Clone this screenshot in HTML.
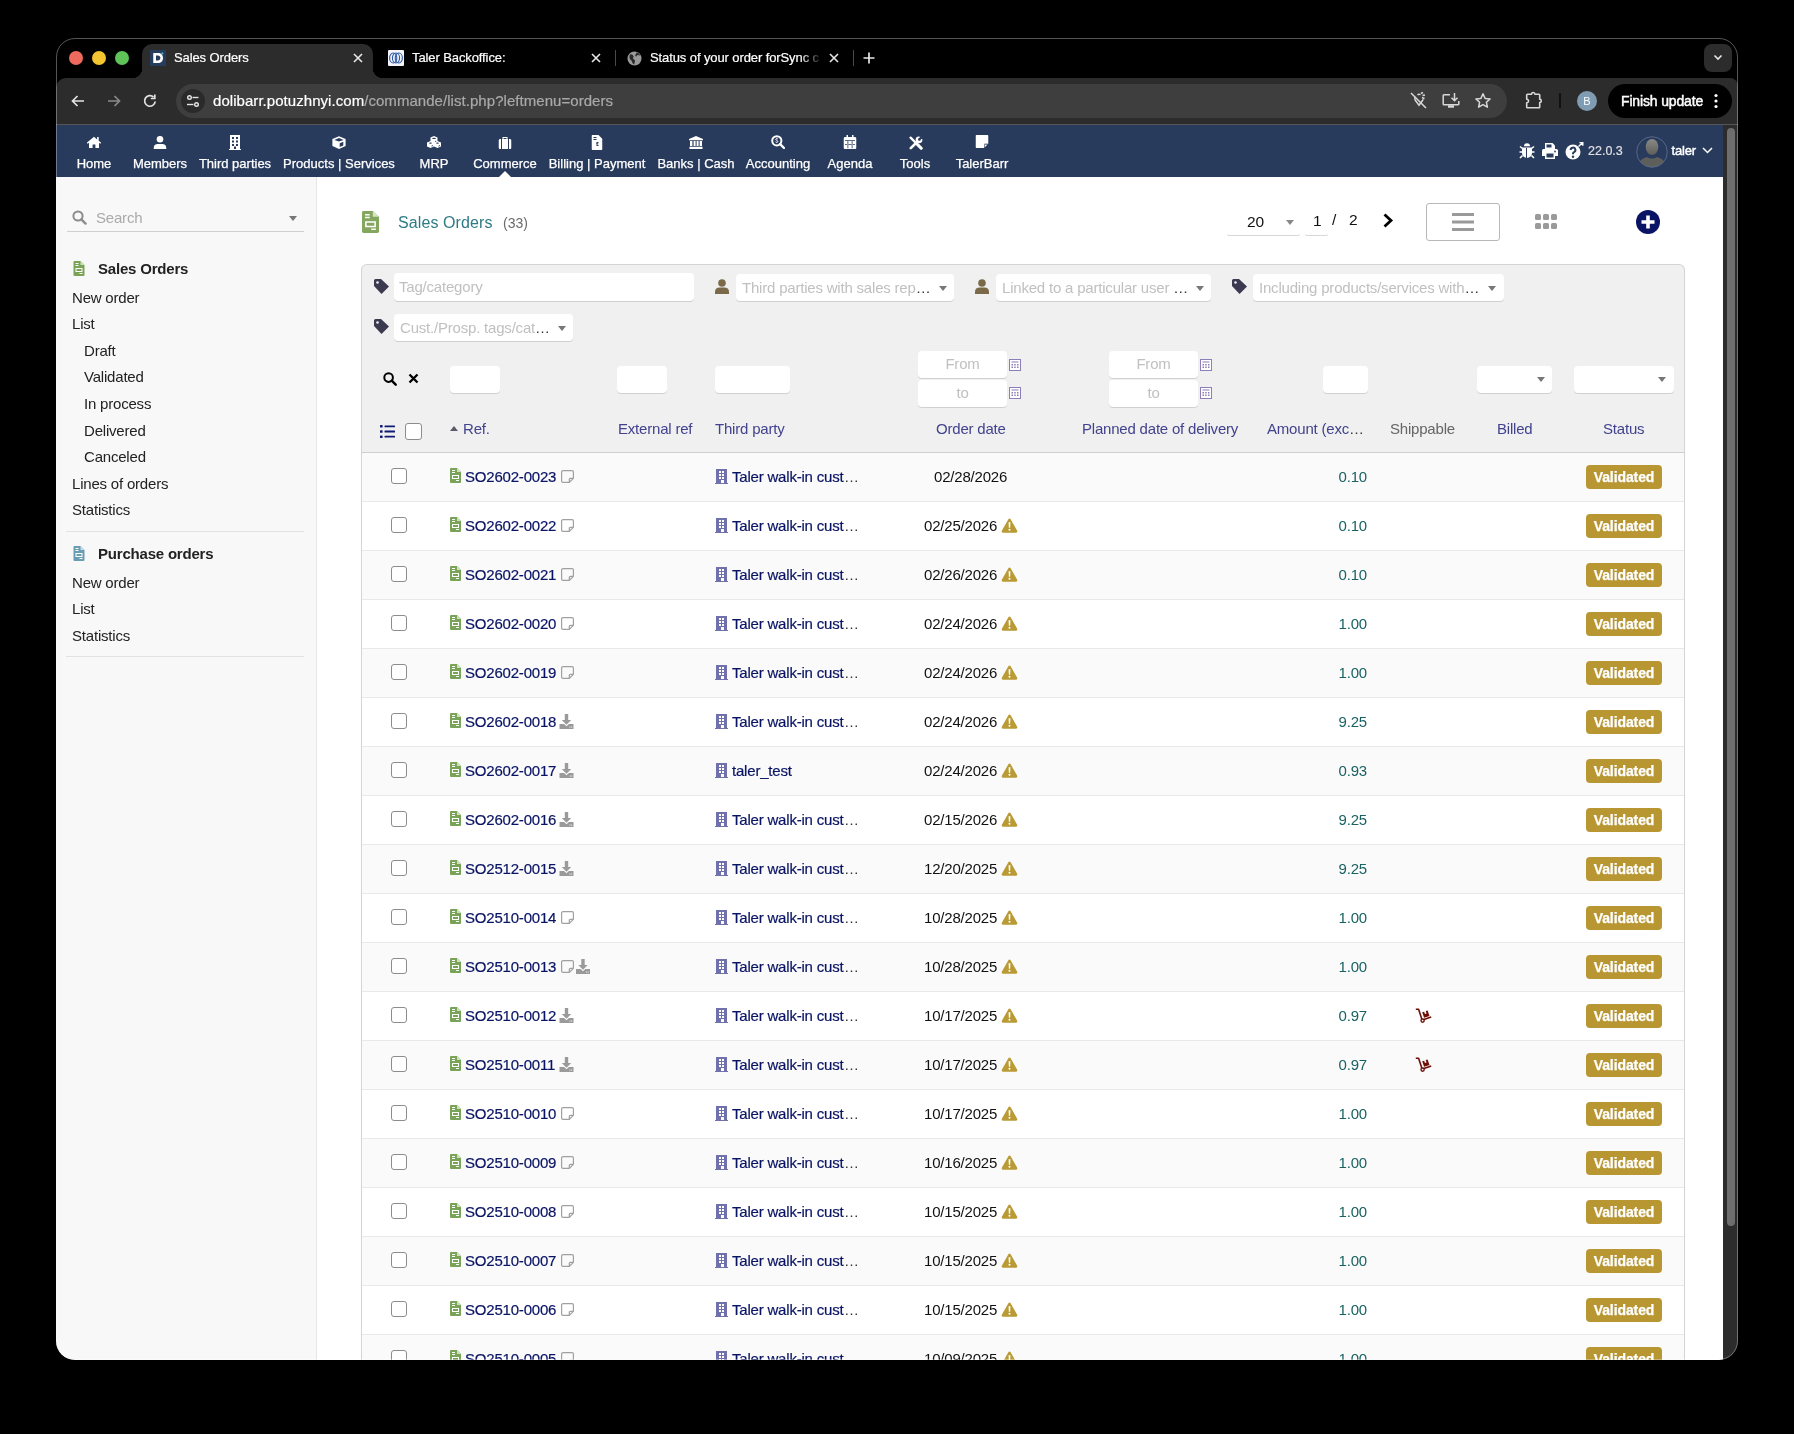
<!DOCTYPE html>
<html><head><meta charset="utf-8"><title>Sales Orders</title>
<style>
*{box-sizing:border-box}
html,body{margin:0;padding:0;width:1794px;height:1434px;overflow:hidden;background:#000;font-family:"Liberation Sans",sans-serif}
.abs{position:absolute}
#win{position:absolute;left:0;top:0;width:1794px;height:1434px;clip-path:inset(38px 56px 74px 56px round 19px);will-change:transform}
#winborder{position:absolute;left:56px;top:38px;width:1682px;height:1322px;border:1px solid rgba(255,255,255,.33);border-radius:19px;pointer-events:none;z-index:50}
/* chrome */
#tabstrip{position:absolute;left:56px;top:38px;width:1682px;height:40px;background:#000}
.tl{position:absolute;width:14px;height:14px;border-radius:50%;top:51px}
#tab1{position:absolute;left:142px;top:44px;width:231px;height:34px;background:#2c2c2c;border-radius:10px 10px 0 0}
#tab1:before,#tab1:after{content:"";position:absolute;bottom:0;width:10px;height:10px}
#tab1:before{left:-10px;background:radial-gradient(circle at 0 0,#000 10px,#2c2c2c 10.5px)}
#tab1:after{right:-10px;background:radial-gradient(circle at 100% 0,#000 10px,#2c2c2c 10.5px)}
.tabt{position:absolute;top:50px;font-size:13px;color:#fff;line-height:16px;white-space:nowrap;-webkit-text-stroke:.2px #fff;letter-spacing:-.1px}
.tabx{position:absolute;top:51px;width:14px;height:14px}
.tsep{position:absolute;top:50px;width:1px;height:16px;background:#4a4a4a}
#toolbar{position:absolute;left:56px;top:78px;width:1682px;height:46px;background:#2c2c2c;border-radius:10px 8px 0 0}
#tbline{position:absolute;left:56px;top:124px;width:1682px;height:1px;background:#555}
#url{position:absolute;left:176px;top:84px;width:1331px;height:34px;background:#3e3e3e;border-radius:17px}
#urltxt{position:absolute;left:213px;top:92px;font-size:15px;line-height:18px;color:#fff;white-space:nowrap;letter-spacing:.05px;-webkit-text-stroke:.2px #fff}
#urltxt span{color:#a9a9a9;-webkit-text-stroke:.2px #a9a9a9}
#finish{position:absolute;left:1608px;top:84px;width:124px;height:34px;background:#000;border-radius:17px}
/* dolibarr nav */
#nav{position:absolute;left:56px;top:125px;width:1667px;height:52px;background:#293b5c}
.mi{position:absolute;top:157px;font-size:13px;line-height:13px;color:#fff;white-space:nowrap;transform:translateX(-50%);-webkit-text-stroke:.25px #fff}
.mic{position:absolute;top:136px;width:16px;height:14px;fill:#fff;transform:translateX(-50%)}
/* scrollbar */
#sbtrack{position:absolute;left:1723px;top:125px;width:15px;height:1235px;background:#2c2c2c}
#sbthumb{position:absolute;left:1727px;top:128px;width:8px;height:1098px;background:#6e6e6e;border-radius:4px}
/* sidebar */
#side{position:absolute;left:56px;top:177px;width:261px;height:1183px;background:#f8f8f8;border-right:1px solid #e6e6e6}
.si{position:absolute;font-size:15px;line-height:15px;color:#222;white-space:nowrap;letter-spacing:-.2px}
.sh{font-weight:bold;color:#222}
.ssep{position:absolute;left:66px;width:238px;height:1px;background:#e2e2e2}
/* content */
#content{position:absolute;left:317px;top:177px;width:1406px;height:1183px;background:#fff}
.t15{font-size:15px;letter-spacing:-.2px}
#fbox{position:absolute;left:361px;top:264px;width:1324px;height:1100px;background:#f0f0f0;border:1px solid #d4d4d4;border-bottom:none;border-radius:6px 6px 0 0}
.inp{position:absolute;background:#fff;border-radius:4px;box-shadow:0 1px 0 #d0d0d0}
.ph{position:absolute;font-size:15px;line-height:16px;color:#c0c0c0;white-space:nowrap;letter-spacing:-.2px}
.ph b{font-weight:normal;color:#333;letter-spacing:0}
.sarr{position:absolute;width:0;height:0;border-left:4px solid transparent;border-right:4px solid transparent;border-top:5px solid #777}
.th{position:absolute;top:421px;font-size:15px;line-height:16px;color:#42428f;white-space:nowrap;letter-spacing:-.2px}
/* rows */
.r{position:absolute;left:362px;width:1322px;height:49px;background:#fff;border-bottom:1px solid #e9e9e9}
.r.odd{background:#fafafa}
.r>*{position:absolute}
.cb{left:29px;top:15px;width:16px;height:16px;border:1.5px solid #8c8c8c;border-radius:3px;background:#fff}
.ref{left:88px;top:15px;height:16px;font-size:15px;line-height:16px;color:#0a1464;-webkit-text-stroke:.2px #0a1464;white-space:nowrap;letter-spacing:-.2px}
.ri{position:absolute;left:0;top:0;width:11px;height:15px}
.rt{position:absolute;left:15px;top:1px}
.ni{position:absolute;left:111px;top:1.5px;width:13px;height:13px}
.di{position:absolute;left:108.5px;top:1px;width:15px;height:15px}
.di.d2{left:126px;width:14px}
.tp{left:353px;top:15px;font-size:15px;line-height:16px;color:#0a1464;-webkit-text-stroke:.2px #0a1464;white-space:nowrap;letter-spacing:-.2px}
.tp span{position:absolute;left:17px;top:1px}
.tp .ell{left:129px;color:#333;-webkit-text-stroke:0}
.bi{position:absolute;left:0;top:1px;width:13px;height:15px}
.dt{left:572px;top:16px;font-size:15px;line-height:16px;color:#111;white-space:nowrap;letter-spacing:-.2px}
.dt.w{left:562px}
.wi{position:absolute;left:77px;top:0px;width:17px;height:15px}
.am{right:317px;top:16px;font-size:15px;line-height:16px;color:#1a6262;letter-spacing:-.2px}
.cart{left:1053px;top:16px;width:17px;height:15px}
.badge{left:1224px;top:12px;width:76px;height:24px;background:#b89632;border-radius:4px;color:#fff;font-weight:bold;font-size:14px;line-height:24px;text-align:center;letter-spacing:-.1px;-webkit-text-stroke:.25px #fff}
</style></head><body>
<svg width="0" height="0" style="position:absolute">
<defs>
<symbol id="i-order" viewBox="0 0 11 15"><path fill="#79a356" d="M1 0h6l4 4v10a1 1 0 0 1-1 1H1a1 1 0 0 1-1-1V1a1 1 0 0 1 1-1z"/><path fill="#fff" d="M2 2h3v1H2zM2 4h3v1H2zM2 7h7v4H2zM3 8v2h5V8zM6 12h3v1H6z"/><path fill="#cfe0bd" d="M7 0v4h4z"/></symbol>
<symbol id="i-note" viewBox="0 0 13 13"><path fill="none" stroke="#a0a0a0" stroke-width="1.2" d="M2 .6h9A1.4 1.4 0 0 1 12.4 2v6.3L8.3 12.4H2A1.4 1.4 0 0 1 .6 11V2A1.4 1.4 0 0 1 2 .6z M12.2 8.3h-2.7a1.2 1.2 0 0 0-1.2 1.2v2.7"/></symbol>
<symbol id="i-dl" viewBox="0 0 14 15"><path fill="#9a9a9a" d="M5.3 0h3.4v6h3l-4.7 4.8L2.3 6h3z M0 10h4.6l2.4 2.3 2.4-2.3H14v5H0z"/><circle cx="10.5" cy="13" r=".6" fill="#fff"/><circle cx="12.2" cy="13" r=".6" fill="#fff"/></symbol>
<symbol id="i-bld" viewBox="0 0 13 15"><path fill="#7070ad" d="M1 0h11v14h1v1H0v-1h1z"/><path fill="#fff" d="M3 2h2v2H3zM6 2h2v2H6zM3 5h2v2H3zM6 5h2v2H6zM3 8h2v2H3zM6 8h2v2H6zM5 11h3v3H5z" transform="translate(1 0)"/></symbol>
<symbol id="i-warn" viewBox="0 0 17 16"><path fill="#b99a35" d="M8.5 0.5c.5 0 .9.3 1.2.8l7 12.3c.5.9-.1 2-1.2 2H1.5c-1 0-1.7-1.1-1.2-2l7-12.3c.3-.5.7-.8 1.2-.8z"/><path fill="#fff" d="M7.5 4.5h2l-.3 6h-1.4zM8.5 11.5a1.1 1.1 0 1 1 0 2.2 1.1 1.1 0 0 1 0-2.2z"/></symbol>
<symbol id="i-cart" viewBox="0 0 17 15"><path d="M.8 1.3h2.8l3.2 9.6M8.9 11.6l7.3-2.5" fill="none" stroke="#6e1008" stroke-width="1.6" stroke-linejoin="round"/><circle cx="7.6" cy="12.6" r="1.6" fill="none" stroke="#6e1008" stroke-width="1.4"/><path fill="#6e1008" d="M7.2 4.3l1.9-.6.9 2.4 1.5-.5-.8-2.5 1.9-.6 1.9 5.4-5.4 1.8z"/></symbol>
<symbol id="i-tag" viewBox="0 0 15 15"><path fill="#3b3a50" d="M1.5 0h5.5l8 7.5-7.5 7.5-7.5-8V1.5A1.5 1.5 0 0 1 1.5 0z"/><circle cx="3.5" cy="3.5" r="1.3" fill="#f0f0f0"/></symbol>
<symbol id="i-user" viewBox="0 0 14 15"><circle cx="7" cy="4" r="3.8" fill="#7a6a4a"/><path fill="#7a6a4a" d="M0 15v-2.5C0 10 2 8.5 4.5 8.5h5C12 8.5 14 10 14 12.5V15z"/></symbol>
<symbol id="i-cal" viewBox="0 0 12 12"><rect x=".5" y=".5" width="11" height="11" fill="#fff" stroke="#8c7fb7"/><path fill="#8c7fb7" d="M2.5 2.5h7v1h-7zM2.5 5h1.5v1.5H2.5zM5.2 5h1.5v1.5H5.2zM8 5h1.5v1.5H8zM2.5 7.5h1.5V9H2.5zM5.2 7.5h1.5V9H5.2zM8 7.5h1.5V9H8z"/></symbol>
</defs></svg>
<div id="win">
<div id="tabstrip"></div>
<div class="tl" style="left:69px;background:#ee6a5e"></div>
<div class="tl" style="left:92px;background:#f5c431"></div>
<div class="tl" style="left:115px;background:#5fc35a"></div>
<div id="toolbar"></div>
<div id="tab1"></div>
<!-- tab1 favicon -->
<svg class="abs" style="left:150px;top:50px" width="16" height="16" viewBox="0 0 16 16"><rect width="16" height="16" fill="#263c5c"/><path fill="#fff" d="M3.5 3h4.5c3 0 5 2 5 5s-2 5-5 5H3.5zM6 5.5v5h1.8c1.6 0 2.6-1 2.6-2.5S9.4 5.5 7.8 5.5z"/><rect x="3.5" y="3" width="2.3" height="10" fill="#fff"/><circle cx="12.3" cy="3.5" r="1" fill="#5cc8d0"/></svg>
<div class="tabt" style="left:174px">Sales Orders</div>
<svg class="tabx" style="left:351px" viewBox="0 0 14 14"><path d="M3 3l8 8M11 3l-8 8" stroke="#e8e8e8" stroke-width="1.6"/></svg>
<!-- tab2 -->
<svg class="abs" style="left:388px;top:50px" width="16" height="16" viewBox="0 0 16 16"><rect width="16" height="16" rx="1" fill="#f4f4f8"/><g fill="none" stroke="#2a56a8" stroke-width="1.1"><ellipse cx="5.2" cy="8" rx="3.6" ry="5"/><ellipse cx="8" cy="8" rx="3.6" ry="5"/><ellipse cx="10.8" cy="8" rx="3.6" ry="5"/></g></svg>
<div class="tabt" style="left:412px">Taler Backoffice:</div>
<svg class="tabx" style="left:589px" viewBox="0 0 14 14"><path d="M3 3l8 8M11 3l-8 8" stroke="#e8e8e8" stroke-width="1.6"/></svg>
<div class="tsep" style="left:615px"></div>
<!-- tab3 -->
<svg class="abs" style="left:627px;top:51px" width="15" height="15" viewBox="0 0 15 15"><circle cx="7.5" cy="7.5" r="7" fill="#9a9a9a"/><path fill="#2a2a2a" d="M3 3.5c1.5-.5 3 .5 3.5 1.8.3 1-.8 1.5-.3 2.5.4.8 1.6.6 1.8 1.8.2 1.2-.8 2-.6 3.9-1.5-.5-2.2-2-2.6-3.3-.3-1-1.5-1.2-2-2.1C2.3 7 2.4 4.8 3 3.5zM9.5 1.3c1.6.4 3 1.6 3.7 3.1-1 .2-1.6-.6-2.6-.4-.9.2-.6 1.4-1.6 1.5-.8 0-.9-1-.6-1.7.3-.8 1.4-1.2 1.1-2.5z"/></svg>
<div class="tabt" style="left:650px;width:172px;overflow:hidden;-webkit-mask-image:linear-gradient(90deg,#000 150px,transparent 172px)">Status of your order forSync c</div>
<svg class="tabx" style="left:827px" viewBox="0 0 14 14"><path d="M3 3l8 8M11 3l-8 8" stroke="#e8e8e8" stroke-width="1.6"/></svg>
<div class="tsep" style="left:853px"></div>
<svg class="abs" style="left:862px;top:51px" width="14" height="14" viewBox="0 0 14 14"><path d="M7 1.5v11M1.5 7h11" stroke="#e8e8e8" stroke-width="1.7"/></svg>
<!-- tab list button -->
<div class="abs" style="left:1704px;top:44px;width:28px;height:28px;background:#2c2c2c;border-radius:8px"></div>
<svg class="abs" style="left:1712px;top:51px" width="12" height="12" viewBox="0 0 12 12"><path d="M2.5 4.5l3.5 3.5 3.5-3.5" fill="none" stroke="#e8e8e8" stroke-width="1.6"/></svg>
<!-- toolbar -->
<svg class="abs" style="left:70px;top:93px" width="16" height="16" viewBox="0 0 16 16"><path d="M14 8H2.5M7.5 3l-5 5 5 5" fill="none" stroke="#e3e3e3" stroke-width="1.7"/></svg>
<svg class="abs" style="left:106px;top:93px" width="16" height="16" viewBox="0 0 16 16"><path d="M2 8h11.5M8.5 3l5 5-5 5" fill="none" stroke="#8a8a8a" stroke-width="1.7"/></svg>
<svg class="abs" style="left:142px;top:93px" width="16" height="16" viewBox="0 0 16 16"><path d="M13.2 8.5A5.3 5.3 0 1 1 11.5 4" fill="none" stroke="#e3e3e3" stroke-width="1.7"/><path d="M12.8 1.5v4h-4" fill="none" stroke="#e3e3e3" stroke-width="1.7"/></svg>
<div id="url"></div>
<div class="abs" style="left:181px;top:89px;width:24px;height:24px;border-radius:50%;background:#2a2a2a"></div>
<svg class="abs" style="left:185px;top:93px" width="16" height="16" viewBox="0 0 16 16"><g fill="none" stroke="#e3e3e3" stroke-width="1.4"><circle cx="4.5" cy="4.5" r="1.8"/><path d="M7.5 4.5h6"/><circle cx="11.5" cy="11.5" r="1.8"/><path d="M2 11.5h6.5"/></g></svg>
<div id="urltxt">dolibarr.potuzhnyi.com<span>/commande/list.php?leftmenu=orders</span></div>
<svg class="abs" style="left:1409px;top:91px" width="19" height="19" viewBox="0 0 19 19"><g fill="none" stroke="#d8d8d8" stroke-width="1.5"><path d="M2 2l15 15"/><path d="M6 5.5c-.5 1-.5 2.5.3 3.8l3.7 5 3.7-5c.2-.3.4-.7.5-1"/><path d="M8.5 3.8c.8-.5 2-.6 3-.2M12 2.5l2-1M13.5 4.5l2.5-.5M13 6.5l2.5 1"/></g></svg>
<svg class="abs" style="left:1442px;top:92px" width="18" height="17" viewBox="0 0 18 17"><g fill="none" stroke="#d8d8d8" stroke-width="1.5"><path d="M8 2.8H2a.8.8 0 0 0-.8.8v8.4a.8.8 0 0 0 .8.8h14a.8.8 0 0 0 .8-.8V9"/><path d="M12.5 1v7.5M9.5 5.8l3 3 3-3"/></g><rect x="6" y="13.3" width="6" height="2.4" fill="#d8d8d8"/></svg>
<svg class="abs" style="left:1474px;top:92px" width="18" height="18" viewBox="0 0 18 18"><path d="M9 1.8l2.1 4.6 5 .5-3.7 3.4 1 4.9L9 12.7l-4.4 2.5 1-4.9L1.9 6.9l5-.5z" fill="none" stroke="#d8d8d8" stroke-width="1.5" stroke-linejoin="round"/></svg>
<svg class="abs" style="left:1524px;top:91px" width="19" height="18" viewBox="0 0 19 18"><path d="M3.5 3.2h4a1.7 1.7 0 0 1 3.4 0h4a.8.8 0 0 1 .8.8v4.3a1.6 1.6 0 0 1 0 3.2V16a.8.8 0 0 1-.8.8H3.5a.8.8 0 0 1-.8-.8v-4.2a1.8 1.8 0 0 0 0-3.6V4a.8.8 0 0 1 .8-.8z" fill="none" stroke="#d8d8d8" stroke-width="1.6" stroke-linejoin="round"/></svg>
<div class="abs" style="left:1559px;top:93px;width:2px;height:15px;background:#111"></div>
<div class="abs" style="left:1577px;top:91px;width:20px;height:20px;border-radius:50%;background:#7f9cb3;color:#fff;font-size:11px;line-height:20px;text-align:center">B</div>
<div id="finish"></div>
<div class="abs" style="left:1621px;top:93px;font-size:14px;line-height:16px;color:#fff;-webkit-text-stroke:.45px #fff;letter-spacing:-.15px;white-space:nowrap">Finish update</div>
<svg class="abs" style="left:1712px;top:93px" width="8" height="16" viewBox="0 0 8 16"><circle cx="4" cy="2.5" r="1.6" fill="#fff"/><circle cx="4" cy="8" r="1.6" fill="#fff"/><circle cx="4" cy="13.5" r="1.6" fill="#fff"/></svg>
<div id="tbline"></div>
<div id="nav"></div><div class="abs" style="left:56px;top:177px;width:1667px;height:1px;background:#9a9a9a;opacity:.6"></div>
<!-- home -->
<svg class="mic" style="left:94px;top:136px;width:15px;height:12px" viewBox="0 0 15 12"><path fill="#fff" d="M7.5 0.8L0.3 6.8l.9 1 1.3-1.1V12h3.6V8.5h2.8V12h3.6V6.7l1.3 1.1.9-1L12.2 4.8V1h-1.6v2.4z"/></svg>
<div class="mi" style="left:94px">Home</div>
<!-- members -->
<svg class="mic" style="left:160px;top:136px;width:13px;height:13px" viewBox="0 0 13 13"><circle cx="6.5" cy="3.3" r="3.3" fill="#fff"/><path fill="#fff" d="M0 12.2C0 9.5 2 8 4.2 8h4.6C11 8 13 9.5 13 12.2V13H0z"/></svg>
<div class="mi" style="left:160px">Members</div>
<!-- third parties -->
<svg class="mic" style="left:235px;top:135px;width:12px;height:15px" viewBox="0 0 12 15"><path fill="#fff" d="M1 0h10v14h1v1H0v-1h1z"/><path fill="#293b5c" d="M3 2h2v2H3zM7 2h2v2H7zM3 5.5h2v2H3zM7 5.5h2v2H7zM3 9h2v2H3zM7 9h2v2H7zM5 11.5h2V14H5z"/></svg>
<div class="mi" style="left:235px">Third parties</div>
<!-- products -->
<svg class="mic" style="left:339px;top:135.5px;width:14px;height:13px" viewBox="0 0 14 13"><path fill="#fff" d="M7 .2l6.6 2.8v7L7 12.9.4 10V3z"/><path fill="#293b5c" d="M7 2l4.6 1.9L7 5.6 2.4 3.9z"/><path fill="#293b5c" d="M7.7 7.2l3.6-1.4v3.8L7.7 11z"/></svg>
<div class="mi" style="left:339px">Products | Services</div>
<!-- MRP -->
<svg class="mic" style="left:434px;top:136px;width:14px;height:12px" viewBox="0 0 14 12"><g fill="#fff"><path d="M7 0l3.5 1.6v3.9L7 7.1 3.5 5.5V1.6z"/><path d="M3.5 4.9L7 6.5v3.9L3.5 12 0 10.4V6.5z"/><path d="M10.5 4.9L14 6.5v3.9L10.5 12 7 10.4V6.5z"/></g><g fill="#293b5c"><ellipse cx="7" cy="2.4" rx="1.8" ry=".6"/><ellipse cx="3.5" cy="7.1" rx="1.5" ry=".7"/><ellipse cx="10.5" cy="7.1" rx="1.5" ry=".7"/><ellipse cx="5.2" cy="9.8" rx=".5" ry="1" transform="rotate(35 5.2 9.8)"/><ellipse cx="12.2" cy="9.8" rx=".5" ry="1" transform="rotate(35 12.2 9.8)"/><ellipse cx="8.6" cy="5.2" rx=".7" ry=".5"/></g></svg>
<div class="mi" style="left:434px">MRP</div>
<!-- commerce -->
<svg class="mic" style="left:505px;top:137px;width:13px;height:12px" viewBox="0 0 13 12"><path fill="#fff" d="M4 0h5v2h2.5A1.5 1.5 0 0 1 13 3.5v7A1.5 1.5 0 0 1 11.5 12h-10A1.5 1.5 0 0 1 0 10.5v-7A1.5 1.5 0 0 1 1.5 2H4zM5 1v1h3V1z"/><path fill="#293b5c" d="M2.5 2h1v10h-1zM9.5 2h1v10h-1z"/></svg>
<div class="mi" style="left:505px">Commerce</div>
<div class="abs" style="left:499px;top:171px;width:0;height:0;border-left:6px solid transparent;border-right:6px solid transparent;border-bottom:6px solid #fff"></div>
<!-- billing -->
<svg class="mic" style="left:597px;top:135px;width:11px;height:15px" viewBox="0 0 11 15"><path fill="#fff" d="M1 0h6l4 4v10a1 1 0 0 1-1 1H1a1 1 0 0 1-1-1V1a1 1 0 0 1 1-1z"/><path fill="#293b5c" d="M2 2h3v1H2zM2 4h3v1H2zM5 7h2v1H5zM4.5 8.3h2.2v1.2H4.5zM5 10h2v1H5z"/></svg>
<div class="mi" style="left:597px">Billing | Payment</div>
<!-- banks -->
<svg class="mic" style="left:696px;top:136px;width:14px;height:13px" viewBox="0 0 14 13"><path fill="#fff" d="M7 0l7 3v1.3H0V3zM1 5h2.4v5H1zM4.6 5h2v5h-2zM7.6 5h2v5h-2zM10.6 5H13v5h-2.4zM.5 10.8h13V13H.5z"/></svg>
<div class="mi" style="left:696px">Banks | Cash</div>
<!-- accounting -->
<svg class="mic" style="left:778px;top:135px;width:14px;height:14px" viewBox="0 0 14 14"><circle cx="5.8" cy="5.8" r="4.6" fill="none" stroke="#fff" stroke-width="2"/><path d="M9 9l4 4" stroke="#fff" stroke-width="2.4" stroke-linecap="round"/><path d="M6.8 4.2c-.3-.4-.7-.5-1.1-.5-.6 0-1 .3-1 .8 0 1.1 2.1.7 2.1 1.9 0 .5-.4.9-1.1.9-.5 0-.9-.2-1.2-.5M5.8 3v.7M5.8 7.3V8" fill="none" stroke="#fff" stroke-width=".9"/></svg>
<div class="mi" style="left:778px">Accounting</div>
<!-- agenda -->
<svg class="mic" style="left:850px;top:135px;width:13px;height:14px" viewBox="0 0 13 14"><path fill="#fff" d="M1.5 2H3V0h1.5v2h4V0H10v2h1.5A1.5 1.5 0 0 1 13 3.5v9a1.5 1.5 0 0 1-1.5 1.5h-10A1.5 1.5 0 0 1 0 12.5v-9A1.5 1.5 0 0 1 1.5 2z"/><path fill="#293b5c" d="M1.5 5.2h10v.8h-10zM4 6v7.3h.8V6zM8.2 6v7.3H9V6zM1.5 9.2h10v.8h-10z"/></svg>
<div class="mi" style="left:850px">Agenda</div>
<!-- tools -->
<svg class="mic" style="left:915.5px;top:135.5px;width:14px;height:14px" viewBox="0 0 14 14"><path d="M1.6 1.6l10.6 10.6" stroke="#fff" stroke-width="2.3" stroke-linecap="round"/><path d="M8.6 8.6l3.6 3.6" stroke="#fff" stroke-width="3" stroke-linecap="round"/><path d="M1.8 12.2L8 6" stroke="#fff" stroke-width="2.6" stroke-linecap="round"/><circle cx="10" cy="3.8" r="3.4" fill="#fff"/><circle cx="10.4" cy="3.4" r="1.4" fill="#293b5c"/><path fill="#293b5c" d="M10.2 3.2L11 -.5 14.5 3z"/></svg>
<div class="mi" style="left:915px">Tools</div>
<!-- talerbarr -->
<svg class="mic" style="left:982px;top:135px;width:13px;height:13px" viewBox="0 0 13 13"><path fill="#fff" d="M1 0h11a1 1 0 0 1 1 1v7.5L8.5 13H1a1 1 0 0 1-1-1V1a1 1 0 0 1 1-1z"/><path fill="#293b5c" d="M13 8.5H9.5a1 1 0 0 0-1 1V13h1V10h3.5z" opacity=".6"/></svg>
<div class="mi" style="left:982px">TalerBarr</div>
<!-- right side -->
<svg class="abs" style="left:1519px;top:143px" width="16" height="16" viewBox="0 0 16 16"><path fill="#fff" d="M5 3.2a3 3 0 0 1 6 0zM4 4.5h8c.6 0 1 .4 1 1V10a5 5 0 0 1-10 0V5.5c0-.6.4-1 1-1z"/><path d="M1 3.5l2.5 2M15 3.5l-2.5 2M.5 9h2.8M15.5 9h-2.8M1 15l2.5-2.5M15 15l-2.5-2.5" stroke="#fff" stroke-width="1.6"/><path d="M7.5 5v10" stroke="#293b5c" stroke-width="1"/></svg>
<svg class="abs" style="left:1542px;top:143px" width="16" height="16" viewBox="0 0 16 16"><path fill="#fff" d="M3 0h7.5L13 2.5V6H3z"/><path fill="#fff" d="M1.5 6h13A1.5 1.5 0 0 1 16 7.5V13h-3v3H3v-3H0V7.5A1.5 1.5 0 0 1 1.5 6z"/><path fill="#293b5c" d="M4.5 1.5h5v3h-5zM4.5 10.5h7v4h-7z"/><circle cx="13" cy="8.5" r=".9" fill="#293b5c"/></svg>
<svg class="abs" style="left:1565px;top:142px" width="19" height="18" viewBox="0 0 19 18"><circle cx="8" cy="10" r="7.5" fill="#fff"/><path d="M5.6 8a2.4 2.4 0 1 1 3.4 2.2c-.7.3-1 .8-1 1.5v.5" fill="none" stroke="#293b5c" stroke-width="2"/><circle cx="8" cy="14.7" r="1.2" fill="#293b5c"/><path d="M13.5 4.5L17.5 .8M14.5 .5h3.3v3.3" fill="none" stroke="#fff" stroke-width="1.4"/></svg>
<div class="abs" style="left:1588px;top:144.5px;font-size:12.5px;line-height:13px;color:#e0e0e0;white-space:nowrap;-webkit-text-stroke:.15px #e0e0e0">22.0.3</div>
<svg class="abs" style="left:1636px;top:136px" width="32" height="32" viewBox="0 0 32 32"><defs><clipPath id="avc"><circle cx="16" cy="16" r="15.3"/></clipPath><linearGradient id="avg" x1="0" y1="0" x2="0" y2="1"><stop offset="0" stop-color="#8a8a86"/><stop offset="1" stop-color="#5d5d59"/></linearGradient></defs><g clip-path="url(#avc)"><ellipse cx="16" cy="11" rx="6.3" ry="8" fill="url(#avg)"/><path d="M2 32c0-7 5-10 9-11 2 1.2 3.3 1.6 5 1.6s3-.4 5-1.6c4 1 9 4 9 11z" fill="#5e5e5a"/></g><circle cx="16" cy="16" r="15.3" fill="none" stroke="#5b6d8c" stroke-width=".9"/></svg>
<div class="abs" style="left:1671.5px;top:144px;font-size:13px;line-height:14px;color:#fff;white-space:nowrap;letter-spacing:-.2px;-webkit-text-stroke:.45px #fff">taler</div>
<svg class="abs" style="left:1702px;top:146px" width="11" height="9" viewBox="0 0 11 9"><path d="M1 2l4.5 4.5L10 2" fill="none" stroke="#fff" stroke-width="1.5"/></svg>
<div id="sbtrack"></div><div id="sbthumb"></div>
<div id="side"></div>
<svg class="abs" style="left:72px;top:210px" width="15" height="15" viewBox="0 0 15 15"><circle cx="6" cy="6" r="4.6" fill="none" stroke="#8c8c8c" stroke-width="2"/><path d="M9.3 9.3l4.3 4.3" stroke="#8c8c8c" stroke-width="2.4" stroke-linecap="round"/></svg>
<div class="si" style="left:96px;top:210px;color:#aaa;font-size:15px">Search</div>
<div class="sarr" style="left:289px;top:216px;border-top-color:#777"></div>
<div class="abs" style="left:67px;top:231px;width:237px;height:1px;background:#cfcfcf;border-radius:1px"></div>
<svg class="abs" style="left:73px;top:261px" width="12" height="15"><use href="#i-order"/></svg>
<div class="si sh" style="left:98px;top:261px">Sales Orders</div>
<div class="si" style="left:72px;top:290px">New order</div>
<div class="si" style="left:72px;top:316px">List</div>
<div class="si" style="left:84px;top:343px">Draft</div>
<div class="si" style="left:84px;top:369px">Validated</div>
<div class="si" style="left:84px;top:396px">In process</div>
<div class="si" style="left:84px;top:423px">Delivered</div>
<div class="si" style="left:84px;top:449px">Canceled</div>
<div class="si" style="left:72px;top:476px">Lines of orders</div>
<div class="si" style="left:72px;top:502px">Statistics</div>
<div class="ssep" style="top:531px"></div>
<svg class="abs" style="left:73px;top:546px" width="12" height="15" viewBox="0 0 11 15"><path fill="#6a9db3" d="M1 0h6l4 4v10a1 1 0 0 1-1 1H1a1 1 0 0 1-1-1V1a1 1 0 0 1 1-1z"/><path fill="#fff" d="M2 2h3v1H2zM2 4h3v1H2zM2 7h7v4H2zM3 8v2h5V8zM6 12h3v1H6z"/><path fill="#c8dde6" d="M7 0v4h4z"/></svg>
<div class="si sh" style="left:98px;top:546px">Purchase orders</div>
<div class="si" style="left:72px;top:575px">New order</div>
<div class="si" style="left:72px;top:601px">List</div>
<div class="si" style="left:72px;top:628px">Statistics</div>
<div class="ssep" style="top:656px"></div>
<div id="content"></div>
<svg class="abs" style="left:362px;top:211px" width="17" height="22" viewBox="0 0 11 15" preserveAspectRatio="none"><path fill="#84a65e" d="M1 0h6l4 4v10a1 1 0 0 1-1 1H1a1 1 0 0 1-1-1V1a1 1 0 0 1 1-1z"/><path fill="#fff" d="M2 2h3v1H2zM2 4h3v1H2zM2 7h7v4H2zM3 8v2h5V8zM6 12h3v1H6z"/><path fill="#d5e3c6" d="M7 0v4h4z"/></svg>
<div class="abs" style="left:398px;top:215px;font-size:16px;line-height:16px;color:#2e7b85;white-space:nowrap;letter-spacing:.1px">Sales Orders</div>
<div class="abs" style="left:503px;top:215px;font-size:14px;line-height:16px;color:#6b6b6b;white-space:nowrap">(33)</div>
<!-- pagination -->
<div class="abs" style="left:1247px;top:214px;font-size:15.5px;line-height:16px;color:#111">20</div>
<div class="sarr" style="left:1286px;top:220px;border-top-color:#888"></div>
<div class="abs" style="left:1227px;top:233px;width:73px;height:2px;border-radius:0 0 4px 4px;box-shadow:0 1px 0 #d8d8d8"></div>
<div class="abs" style="left:1313px;top:213px;font-size:15.5px;line-height:16px;color:#111">1</div>
<div class="abs" style="left:1305px;top:233px;width:23px;height:2px;border-radius:0 0 4px 4px;box-shadow:0 1px 0 #d8d8d8"></div>
<div class="abs" style="left:1332px;top:212px;font-size:15.5px;line-height:16px;color:#111">/</div>
<div class="abs" style="left:1349px;top:212px;font-size:15.5px;line-height:16px;color:#111">2</div>
<svg class="abs" style="left:1382px;top:213px" width="12" height="15" viewBox="0 0 12 15"><path d="M2.5 1.5l6.5 6-6.5 6" fill="none" stroke="#000" stroke-width="2.8"/></svg>
<div class="abs" style="left:1426px;top:203px;width:74px;height:38px;border:1px solid #b8b8b8;border-radius:3px;background:#fff"></div>
<svg class="abs" style="left:1452px;top:213px" width="22" height="18" viewBox="0 0 22 18"><path d="M0 1.6h22M0 9h22M0 16.4h22" stroke="#9a9a9a" stroke-width="3"/></svg>
<svg class="abs" style="left:1535px;top:214px" width="22" height="16" viewBox="0 0 22 16"><g fill="#9a9a9a"><rect x="0" y="0" width="6" height="6" rx="1.5"/><rect x="8" y="0" width="6" height="6" rx="1.5"/><rect x="16" y="0" width="6" height="6" rx="1.5"/><rect x="0" y="9" width="6" height="6" rx="1.5"/><rect x="8" y="9" width="6" height="6" rx="1.5"/><rect x="16" y="9" width="6" height="6" rx="1.5"/></g></svg>
<svg class="abs" style="left:1636px;top:210px" width="24" height="24" viewBox="0 0 24 24"><circle cx="12" cy="12" r="12" fill="#0a1464"/><path d="M12 5.5v13M5.5 12h13" stroke="#fff" stroke-width="3.6"/></svg>
<!-- filter box -->
<div id="fbox"></div>
<svg class="abs" style="left:374px;top:279px" width="15" height="15"><use href="#i-tag"/></svg>
<div class="inp" style="left:394px;top:273px;width:300px;height:28px"></div>
<div class="ph" style="left:399px;top:279px">Tag/category</div>
<svg class="abs" style="left:715px;top:279px" width="14" height="15"><use href="#i-user"/></svg>
<div class="inp" style="left:736px;top:274px;width:218px;height:27px"></div>
<div class="ph" style="left:742px;top:280px">Third parties with sales rep<b>…</b></div>
<div class="sarr" style="left:939px;top:286px"></div>
<svg class="abs" style="left:975px;top:279px" width="14" height="15"><use href="#i-user"/></svg>
<div class="inp" style="left:996px;top:274px;width:215px;height:27px"></div>
<div class="ph" style="left:1002px;top:280px">Linked to a particular user <b>…</b></div>
<div class="sarr" style="left:1196px;top:286px"></div>
<svg class="abs" style="left:1232px;top:279px" width="15" height="15"><use href="#i-tag"/></svg>
<div class="inp" style="left:1253px;top:274px;width:251px;height:27px"></div>
<div class="ph" style="left:1259px;top:280px">Including products/services with<b>…</b></div>
<div class="sarr" style="left:1488px;top:286px"></div>
<svg class="abs" style="left:374px;top:319px" width="15" height="15"><use href="#i-tag"/></svg>
<div class="inp" style="left:394px;top:314px;width:179px;height:27px"></div>
<div class="ph" style="left:400px;top:320px">Cust./Prosp. tags/cat<b>…</b></div>
<div class="sarr" style="left:558px;top:326px"></div>
<!-- search row -->
<svg class="abs" style="left:383px;top:372px" width="14" height="14" viewBox="0 0 14 14"><circle cx="5.6" cy="5.6" r="4.3" fill="none" stroke="#000" stroke-width="2"/><path d="M8.7 8.7l4 4" stroke="#000" stroke-width="2.4" stroke-linecap="round"/></svg>
<svg class="abs" style="left:408px;top:373px" width="11" height="11" viewBox="0 0 11 11"><path d="M1.5 1.5l8 8M9.5 1.5l-8 8" stroke="#000" stroke-width="2.3"/></svg>
<div class="inp" style="left:450px;top:366px;width:50px;height:27px"></div>
<div class="inp" style="left:617px;top:366px;width:50px;height:27px"></div>
<div class="inp" style="left:715px;top:366px;width:75px;height:27px"></div>
<div class="inp" style="left:918px;top:351px;width:89px;height:27px"></div>
<div class="ph" style="left:918px;top:356px;width:89px;text-align:center">From</div>
<div class="inp" style="left:918px;top:380px;width:89px;height:27px"></div>
<div class="ph" style="left:918px;top:385px;width:89px;text-align:center">to</div>
<svg class="abs" style="left:1009px;top:359px" width="12" height="12"><use href="#i-cal"/></svg>
<svg class="abs" style="left:1009px;top:387px" width="12" height="12"><use href="#i-cal"/></svg>
<div class="inp" style="left:1109px;top:351px;width:89px;height:27px"></div>
<div class="ph" style="left:1109px;top:356px;width:89px;text-align:center">From</div>
<div class="inp" style="left:1109px;top:380px;width:89px;height:27px"></div>
<div class="ph" style="left:1109px;top:385px;width:89px;text-align:center">to</div>
<svg class="abs" style="left:1200px;top:359px" width="12" height="12"><use href="#i-cal"/></svg>
<svg class="abs" style="left:1200px;top:387px" width="12" height="12"><use href="#i-cal"/></svg>
<div class="inp" style="left:1323px;top:366px;width:45px;height:27px"></div>
<div class="inp" style="left:1477px;top:366px;width:75px;height:27px"></div>
<div class="sarr" style="left:1537px;top:377px"></div>
<div class="inp" style="left:1574px;top:366px;width:100px;height:27px"></div>
<div class="sarr" style="left:1658px;top:377px"></div>
<!-- header row -->
<svg class="abs" style="left:380px;top:425px" width="15" height="13" viewBox="0 0 15 13"><g fill="#0f1a73"><rect x="0" y="0" width="2.6" height="2.6" rx=".6"/><rect x="0" y="5.2" width="2.6" height="2.6" rx=".6"/><rect x="0" y="10.4" width="2.6" height="2.6" rx=".6"/><rect x="4.5" y=".4" width="10.5" height="1.8" rx=".5"/><rect x="4.5" y="5.6" width="10.5" height="1.8" rx=".5"/><rect x="4.5" y="10.8" width="10.5" height="1.8" rx=".5"/></g></svg>
<div class="abs" style="left:405px;top:423px;width:17px;height:17px;border:1.5px solid #8c8c8c;border-radius:3px;background:#fff"></div>
<div class="abs" style="left:450px;top:426px;width:0;height:0;border-left:4.5px solid transparent;border-right:4.5px solid transparent;border-bottom:5.5px solid #5a5a6a"></div>
<div class="th" style="left:463px">Ref.</div>
<div class="th" style="left:618px">External ref</div>
<div class="th" style="left:715px">Third party</div>
<div class="th" style="left:936px">Order date</div>
<div class="th" style="left:1082px">Planned date of delivery</div>
<div class="th" style="left:1267px">Amount (exc<span style="color:#333">…</span></div>
<div class="th" style="left:1390px;color:#666">Shippable</div>
<div class="th" style="left:1497px">Billed</div>
<div class="th" style="left:1603px">Status</div>
<div class="abs" style="left:362px;top:452px;width:1322px;height:1px;background:#cfcfcf"></div>
<div id="rows"><div class="r odd" style="top:453px">
<span class="cb"></span>
<span class="ref"><svg class="ri"><use href="#i-order"/></svg><span class="rt">SO2602-0023</span><svg class="ni"><use href="#i-note"/></svg></span>
<span class="tp"><svg class="bi"><use href="#i-bld"/></svg><span>Taler walk-in cust</span><span class="ell">…</span></span>
<span class="dt">02/28/2026</span>
<span class="am">0.10</span>

<span class="badge">Validated</span>
</div>
<div class="r" style="top:502px">
<span class="cb"></span>
<span class="ref"><svg class="ri"><use href="#i-order"/></svg><span class="rt">SO2602-0022</span><svg class="ni"><use href="#i-note"/></svg></span>
<span class="tp"><svg class="bi"><use href="#i-bld"/></svg><span>Taler walk-in cust</span><span class="ell">…</span></span>
<span class="dt w">02/25/2026<svg class="wi"><use href="#i-warn"/></svg></span>
<span class="am">0.10</span>

<span class="badge">Validated</span>
</div>
<div class="r odd" style="top:551px">
<span class="cb"></span>
<span class="ref"><svg class="ri"><use href="#i-order"/></svg><span class="rt">SO2602-0021</span><svg class="ni"><use href="#i-note"/></svg></span>
<span class="tp"><svg class="bi"><use href="#i-bld"/></svg><span>Taler walk-in cust</span><span class="ell">…</span></span>
<span class="dt w">02/26/2026<svg class="wi"><use href="#i-warn"/></svg></span>
<span class="am">0.10</span>

<span class="badge">Validated</span>
</div>
<div class="r" style="top:600px">
<span class="cb"></span>
<span class="ref"><svg class="ri"><use href="#i-order"/></svg><span class="rt">SO2602-0020</span><svg class="ni"><use href="#i-note"/></svg></span>
<span class="tp"><svg class="bi"><use href="#i-bld"/></svg><span>Taler walk-in cust</span><span class="ell">…</span></span>
<span class="dt w">02/24/2026<svg class="wi"><use href="#i-warn"/></svg></span>
<span class="am">1.00</span>

<span class="badge">Validated</span>
</div>
<div class="r odd" style="top:649px">
<span class="cb"></span>
<span class="ref"><svg class="ri"><use href="#i-order"/></svg><span class="rt">SO2602-0019</span><svg class="ni"><use href="#i-note"/></svg></span>
<span class="tp"><svg class="bi"><use href="#i-bld"/></svg><span>Taler walk-in cust</span><span class="ell">…</span></span>
<span class="dt w">02/24/2026<svg class="wi"><use href="#i-warn"/></svg></span>
<span class="am">1.00</span>

<span class="badge">Validated</span>
</div>
<div class="r" style="top:698px">
<span class="cb"></span>
<span class="ref"><svg class="ri"><use href="#i-order"/></svg><span class="rt">SO2602-0018</span><svg class="di"><use href="#i-dl"/></svg></span>
<span class="tp"><svg class="bi"><use href="#i-bld"/></svg><span>Taler walk-in cust</span><span class="ell">…</span></span>
<span class="dt w">02/24/2026<svg class="wi"><use href="#i-warn"/></svg></span>
<span class="am">9.25</span>

<span class="badge">Validated</span>
</div>
<div class="r odd" style="top:747px">
<span class="cb"></span>
<span class="ref"><svg class="ri"><use href="#i-order"/></svg><span class="rt">SO2602-0017</span><svg class="di"><use href="#i-dl"/></svg></span>
<span class="tp"><svg class="bi"><use href="#i-bld"/></svg><span>taler_test</span></span>
<span class="dt w">02/24/2026<svg class="wi"><use href="#i-warn"/></svg></span>
<span class="am">0.93</span>

<span class="badge">Validated</span>
</div>
<div class="r" style="top:796px">
<span class="cb"></span>
<span class="ref"><svg class="ri"><use href="#i-order"/></svg><span class="rt">SO2602-0016</span><svg class="di"><use href="#i-dl"/></svg></span>
<span class="tp"><svg class="bi"><use href="#i-bld"/></svg><span>Taler walk-in cust</span><span class="ell">…</span></span>
<span class="dt w">02/15/2026<svg class="wi"><use href="#i-warn"/></svg></span>
<span class="am">9.25</span>

<span class="badge">Validated</span>
</div>
<div class="r odd" style="top:845px">
<span class="cb"></span>
<span class="ref"><svg class="ri"><use href="#i-order"/></svg><span class="rt">SO2512-0015</span><svg class="di"><use href="#i-dl"/></svg></span>
<span class="tp"><svg class="bi"><use href="#i-bld"/></svg><span>Taler walk-in cust</span><span class="ell">…</span></span>
<span class="dt w">12/20/2025<svg class="wi"><use href="#i-warn"/></svg></span>
<span class="am">9.25</span>

<span class="badge">Validated</span>
</div>
<div class="r" style="top:894px">
<span class="cb"></span>
<span class="ref"><svg class="ri"><use href="#i-order"/></svg><span class="rt">SO2510-0014</span><svg class="ni"><use href="#i-note"/></svg></span>
<span class="tp"><svg class="bi"><use href="#i-bld"/></svg><span>Taler walk-in cust</span><span class="ell">…</span></span>
<span class="dt w">10/28/2025<svg class="wi"><use href="#i-warn"/></svg></span>
<span class="am">1.00</span>

<span class="badge">Validated</span>
</div>
<div class="r odd" style="top:943px">
<span class="cb"></span>
<span class="ref"><svg class="ri"><use href="#i-order"/></svg><span class="rt">SO2510-0013</span><svg class="ni"><use href="#i-note"/></svg><svg class="di d2"><use href="#i-dl"/></svg></span>
<span class="tp"><svg class="bi"><use href="#i-bld"/></svg><span>Taler walk-in cust</span><span class="ell">…</span></span>
<span class="dt w">10/28/2025<svg class="wi"><use href="#i-warn"/></svg></span>
<span class="am">1.00</span>

<span class="badge">Validated</span>
</div>
<div class="r" style="top:992px">
<span class="cb"></span>
<span class="ref"><svg class="ri"><use href="#i-order"/></svg><span class="rt">SO2510-0012</span><svg class="di"><use href="#i-dl"/></svg></span>
<span class="tp"><svg class="bi"><use href="#i-bld"/></svg><span>Taler walk-in cust</span><span class="ell">…</span></span>
<span class="dt w">10/17/2025<svg class="wi"><use href="#i-warn"/></svg></span>
<span class="am">0.97</span>
<svg class="cart"><use href="#i-cart"/></svg>
<span class="badge">Validated</span>
</div>
<div class="r odd" style="top:1041px">
<span class="cb"></span>
<span class="ref"><svg class="ri"><use href="#i-order"/></svg><span class="rt">SO2510-0011</span><svg class="di"><use href="#i-dl"/></svg></span>
<span class="tp"><svg class="bi"><use href="#i-bld"/></svg><span>Taler walk-in cust</span><span class="ell">…</span></span>
<span class="dt w">10/17/2025<svg class="wi"><use href="#i-warn"/></svg></span>
<span class="am">0.97</span>
<svg class="cart"><use href="#i-cart"/></svg>
<span class="badge">Validated</span>
</div>
<div class="r" style="top:1090px">
<span class="cb"></span>
<span class="ref"><svg class="ri"><use href="#i-order"/></svg><span class="rt">SO2510-0010</span><svg class="ni"><use href="#i-note"/></svg></span>
<span class="tp"><svg class="bi"><use href="#i-bld"/></svg><span>Taler walk-in cust</span><span class="ell">…</span></span>
<span class="dt w">10/17/2025<svg class="wi"><use href="#i-warn"/></svg></span>
<span class="am">1.00</span>

<span class="badge">Validated</span>
</div>
<div class="r odd" style="top:1139px">
<span class="cb"></span>
<span class="ref"><svg class="ri"><use href="#i-order"/></svg><span class="rt">SO2510-0009</span><svg class="ni"><use href="#i-note"/></svg></span>
<span class="tp"><svg class="bi"><use href="#i-bld"/></svg><span>Taler walk-in cust</span><span class="ell">…</span></span>
<span class="dt w">10/16/2025<svg class="wi"><use href="#i-warn"/></svg></span>
<span class="am">1.00</span>

<span class="badge">Validated</span>
</div>
<div class="r" style="top:1188px">
<span class="cb"></span>
<span class="ref"><svg class="ri"><use href="#i-order"/></svg><span class="rt">SO2510-0008</span><svg class="ni"><use href="#i-note"/></svg></span>
<span class="tp"><svg class="bi"><use href="#i-bld"/></svg><span>Taler walk-in cust</span><span class="ell">…</span></span>
<span class="dt w">10/15/2025<svg class="wi"><use href="#i-warn"/></svg></span>
<span class="am">1.00</span>

<span class="badge">Validated</span>
</div>
<div class="r odd" style="top:1237px">
<span class="cb"></span>
<span class="ref"><svg class="ri"><use href="#i-order"/></svg><span class="rt">SO2510-0007</span><svg class="ni"><use href="#i-note"/></svg></span>
<span class="tp"><svg class="bi"><use href="#i-bld"/></svg><span>Taler walk-in cust</span><span class="ell">…</span></span>
<span class="dt w">10/15/2025<svg class="wi"><use href="#i-warn"/></svg></span>
<span class="am">1.00</span>

<span class="badge">Validated</span>
</div>
<div class="r" style="top:1286px">
<span class="cb"></span>
<span class="ref"><svg class="ri"><use href="#i-order"/></svg><span class="rt">SO2510-0006</span><svg class="ni"><use href="#i-note"/></svg></span>
<span class="tp"><svg class="bi"><use href="#i-bld"/></svg><span>Taler walk-in cust</span><span class="ell">…</span></span>
<span class="dt w">10/15/2025<svg class="wi"><use href="#i-warn"/></svg></span>
<span class="am">1.00</span>

<span class="badge">Validated</span>
</div>
<div class="r odd" style="top:1335px">
<span class="cb"></span>
<span class="ref"><svg class="ri"><use href="#i-order"/></svg><span class="rt">SO2510-0005</span><svg class="ni"><use href="#i-note"/></svg></span>
<span class="tp"><svg class="bi"><use href="#i-bld"/></svg><span>Taler walk-in cust</span><span class="ell">…</span></span>
<span class="dt w">10/09/2025<svg class="wi"><use href="#i-warn"/></svg></span>
<span class="am">1.00</span>

<span class="badge">Validated</span>
</div></div></div>
<div id="winborder"></div>
</body></html>
